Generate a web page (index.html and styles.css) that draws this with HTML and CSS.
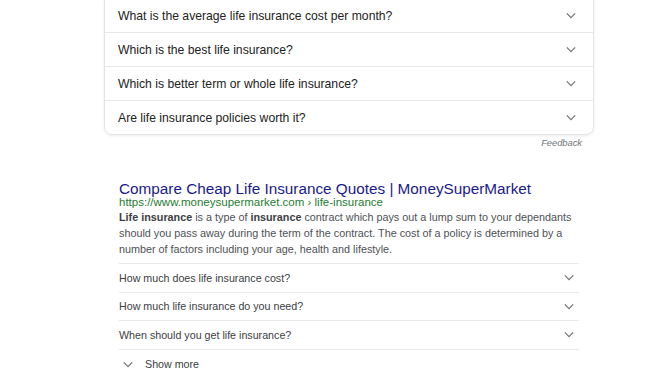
FILE: index.html
```html
<!DOCTYPE html>
<html lang="en">
<head>
    <meta charset="UTF-8">
    <meta name="viewport" content="width=device-width, initial-scale=1.0">
    <title>life insurance - Search</title>
    <link rel="stylesheet" href="styles.css">
</head>
<body>

<div class="faq-card">
    <div class="faq-row">
        <span>What is the average life insurance cost per month?</span>
        <svg class="chev" viewBox="0 0 12 8"><path d="M1 1.5l5 5 5-5"/></svg>
    </div>
    <div class="faq-row">
        <span>Which is the best life insurance?</span>
        <svg class="chev" viewBox="0 0 12 8"><path d="M1 1.5l5 5 5-5"/></svg>
    </div>
    <div class="faq-row">
        <span>Which is better term or whole life insurance?</span>
        <svg class="chev" viewBox="0 0 12 8"><path d="M1 1.5l5 5 5-5"/></svg>
    </div>
    <div class="faq-row">
        <span>Are life insurance policies worth it?</span>
        <svg class="chev" viewBox="0 0 12 8"><path d="M1 1.5l5 5 5-5"/></svg>
    </div>
</div>
<div class="feedback">Feedback</div>

<div class="result">
    <a class="result-title" href="#">Compare Cheap Life Insurance Quotes | MoneySuperMarket</a>
    <div class="result-url">https://www.moneysupermarket.com › life-insurance</div>
    <p class="snippet"><b>Life insurance</b> is a type of <b>insurance</b> contract which pays out a lump sum to your dependants should you pass away during the term of the contract. The cost of a policy is determined by a number of factors including your age, health and lifestyle.</p>

    <div class="sub-list">
        <div class="sub-row">
            <span>How much does life insurance cost?</span>
            <svg class="chev" viewBox="0 0 12 8"><path d="M1 1.5l5 5 5-5"/></svg>
        </div>
        <div class="sub-row">
            <span>How much life insurance do you need?</span>
            <svg class="chev" viewBox="0 0 12 8"><path d="M1 1.5l5 5 5-5"/></svg>
        </div>
        <div class="sub-row">
            <span>When should you get life insurance?</span>
            <svg class="chev" viewBox="0 0 12 8"><path d="M1 1.5l5 5 5-5"/></svg>
        </div>
    </div>
    <div class="show-more">
        <svg class="chev" viewBox="0 0 12 8"><path d="M1 1.5l5 5 5-5"/></svg>
        <span>Show more</span>
    </div>
</div>

</body>
</html>
```

FILE: styles.css
```css
body {
    font-family: Arial, "Liberation Sans", sans-serif;
    background-color: #ffffff;
    margin: 0;
    color: #222222;
}
.faq-card {
    width: 488px;
    margin: -2px 0 0 104px;
    border: 1px solid #e4e4e4;
    border-radius: 0 0 8px 8px;
    box-shadow: 0 1px 3px rgba(0, 0, 0, 0.08);
}
.faq-row {
    height: 33px;
    display: flex;
    align-items: center;
    justify-content: space-between;
    padding: 0 17px 0 13px;
    font-size: 12.2px;
    color: #222222;
    border-top: 1px solid #e8e8e8;
}
.faq-row:first-child {
    border-top: none;
}
.chev {
    width: 10px;
    height: 7px;
    fill: none;
    stroke: #70757a;
    stroke-width: 1.5;
}
.feedback {
    width: 478px;
    margin-left: 104px;
    margin-top: 3px;
    text-align: right;
    font-size: 9.3px;
    font-style: italic;
    color: #70757a;
}
.result {
    width: 460px;
    margin: 34px 0 0 119px;
}
.result-title {
    display: block;
    font-size: 15.3px;
    line-height: 14px;
    color: #1a1a8c;
    text-decoration: none;
}
.result-url {
    font-size: 11.5px;
    line-height: 13px;
    color: #1e7d32;
}
.snippet {
    margin: 0 -12px 0 0;
    font-size: 10.8px;
    line-height: 16px;
    color: #4d5156;
}
.snippet b {
    color: #3c4043;
}
.sub-list {
    margin-top: 6px;
}
.sub-row {
    height: 27.5px;
    display: flex;
    align-items: center;
    justify-content: space-between;
    padding-right: 5px;
    font-size: 10.7px;
    color: #3c4043;
    border-top: 1px solid #ebebeb;
}
.sub-row:last-child {
    border-bottom: 1px solid #ebebeb;
}
.show-more {
    height: 29px;
    display: flex;
    align-items: center;
    gap: 12px;
    padding-left: 4px;
    font-size: 10.7px;
    color: #3c4043;
}
```
